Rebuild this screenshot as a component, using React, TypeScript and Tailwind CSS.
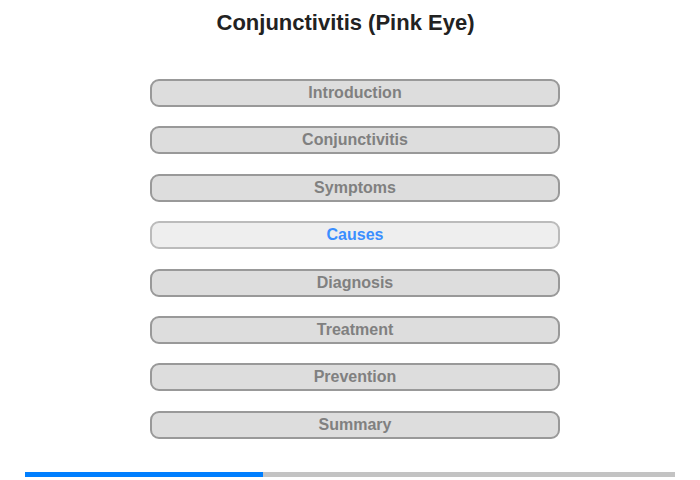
import React from "react";

const items = [
  "Introduction",
  "Conjunctivitis",
  "Symptoms",
  "Causes",
  "Diagnosis",
  "Treatment",
  "Prevention",
  "Summary",
];

export default function App() {
  return (
    <div
      className="w-[700px] h-[480px] bg-white relative overflow-hidden"
      style={{ fontFamily: '"Liberation Sans", Arial, sans-serif' }}
    >
      <div className="flex justify-center pt-[10px] pr-[9px]">
        <h1 className="text-[22px] leading-[26px] font-bold text-[#222]">
          Conjunctivitis (Pink Eye)
        </h1>
      </div>
      <div className="flex flex-col gap-[19.4px] pl-[150px] mt-[43px]">
        {items.map((it) => {
          const active = it === "Causes";
          return (
            <div
              key={it}
              className={
                active
                  ? "w-[410px] h-[28px] rounded-[9px] border-2 border-[#bbb] bg-[#eee] flex items-center justify-center text-[16px] font-bold text-[#3b8eff]"
                  : "w-[410px] h-[28px] rounded-[9px] border-2 border-[#999] bg-[#ddd] flex items-center justify-center text-[16px] font-bold text-[#808080]"
              }
            >
              {it}
            </div>
          );
        })}
      </div>
      <div className="absolute left-[25px] top-[472px] w-[650px] h-[5px] bg-[#c3c3c3] flex">
        <div className="w-[238px] h-full bg-[#007fff]" />
      </div>
    </div>
  );
}
